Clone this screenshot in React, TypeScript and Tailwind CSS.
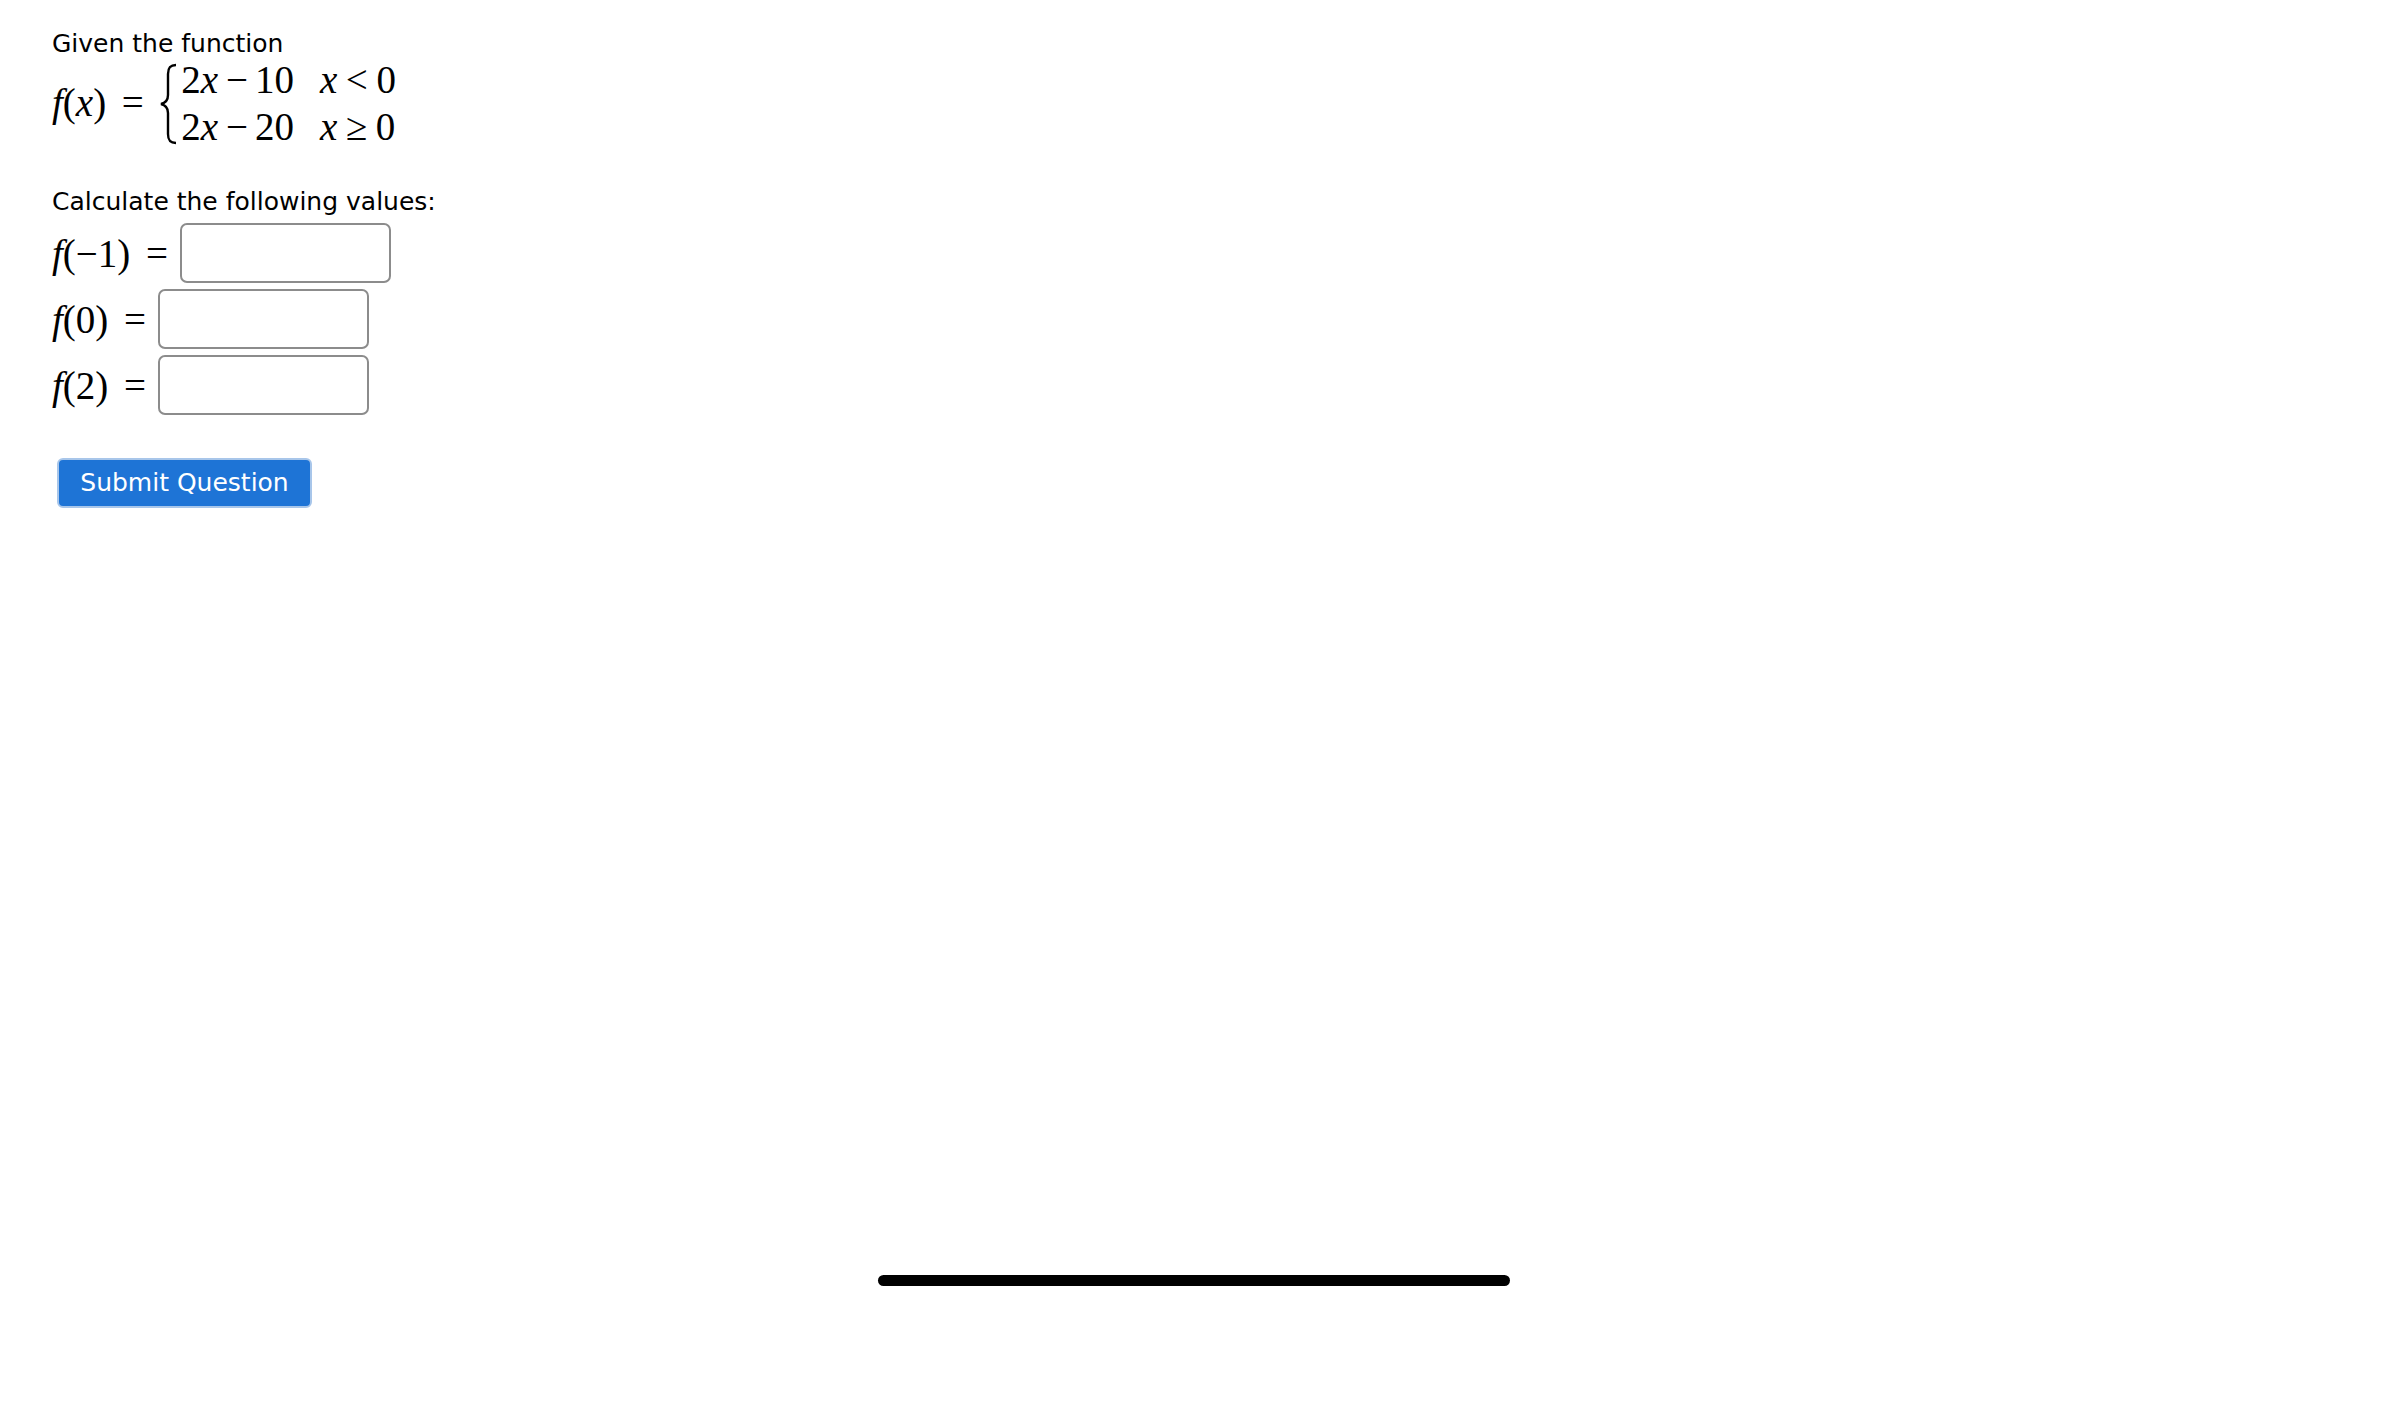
import React from 'react';

const serif = 'font-["Liberation_Serif","Times_New_Roman",serif]';

function Brace() {
  return (
    <svg width="20" height="82" viewBox="0 0 20 82" className="shrink-0">
      <path
        d="M17 2 C11 2 9 5 9 11 L9 32 C9 37 6 40 2 41 C6 42 9 45 9 50 L9 71 C9 77 11 80 17 80"
        fill="none"
        stroke="#000"
        strokeWidth="2.4"
      />
    </svg>
  );
}

function Eq() {
  return <span className="mx-[0.4em]">=</span>;
}

function Answer({ label }: { label: React.ReactNode }) {
  return (
    <div className="flex items-center h-[66px]">
      <span className={`${serif} text-[39px] leading-none whitespace-nowrap flex items-center`}>
        {label}
        <span className="ml-[0.4em] mr-[12px]">=</span>
      </span>
      <input
        type="text"
        className="w-[211px] h-[60px] rounded-[7px] border-2 border-[#8c8c8c] bg-white outline-none"
      />
    </div>
  );
}

export default function App() {
  return (
    <div className='w-[2388px] h-[1405px] bg-white text-black font-["DejaVu_Sans","Verdana",sans-serif] relative'>
      <div className="pl-[52px] pt-[27px]">
        <p className="text-[25px] leading-[34px]">Given the function</p>

        <div className={`${serif} flex items-center text-[39px] mt-[1px]`}>
          <span className="whitespace-nowrap">
            <i>f</i>(<i>x</i>)
          </span>
          <Eq />
          <Brace />
          <div className="grid grid-cols-[auto_auto] gap-x-[26px] gap-y-[11px] ml-[2px] leading-[36px]">
            <span className="whitespace-nowrap">2<i>x</i><span className="ml-[0.2em] mr-[0.18em]">−</span>10</span>
            <span className="whitespace-nowrap"><i>x</i><span className="mx-[0.22em]">&lt;</span>0</span>
            <span className="whitespace-nowrap">2<i>x</i><span className="ml-[0.2em] mr-[0.18em]">−</span>20</span>
            <span className="whitespace-nowrap"><i>x</i><span className="mx-[0.22em]">≥</span>0</span>
          </div>
        </div>

        <p className="text-[25px] leading-[34px] mt-[40px]">Calculate the following values:</p>

        <div className="flex flex-col mt-[1px]">
          <Answer label={<><i>f</i>(−1)</>} />
          <Answer label={<><i>f</i>(0)</>} />
          <Answer label={<><i>f</i>(2)</>} />
        </div>

        <button
          type="button"
          className="mt-[40px] ml-[5px] w-[255px] h-[50px] rounded-[6px] bg-[#1e74d6] border-2 border-[#a8c6ea] text-white text-[25px]"
        >
          Submit Question
        </button>
      </div>

      <div className="absolute left-[878px] top-[1275px] w-[632px] h-[11px] rounded-full bg-black" />
    </div>
  );
}
